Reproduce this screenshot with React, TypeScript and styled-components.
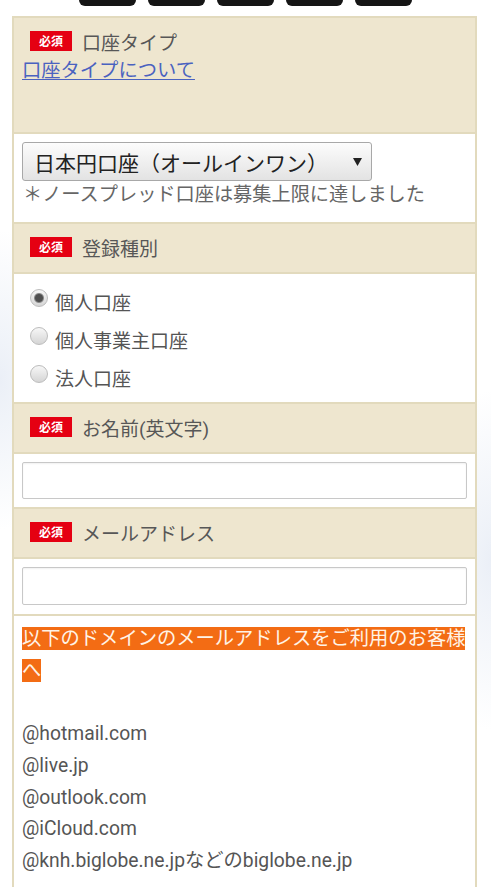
import React from "react";
import styled, { createGlobalStyle } from "styled-components";

const GlobalStyle = createGlobalStyle`
  html, body { margin: 0; padding: 0; }
  body {
    background:
      radial-gradient(ellipse 70px 150px at 0px 380px, rgba(218, 226, 240, 0.55), rgba(255, 255, 255, 0) 100%),
      radial-gradient(ellipse 70px 170px at 491px 560px, rgba(218, 226, 240, 0.55), rgba(255, 255, 255, 0) 100%),
      #ffffff;
    font-family: Roboto, "Noto Sans CJK JP", sans-serif;
    color: #555;
  }
`;

const TopNav = styled.nav`
  display: flex;
  justify-content: center;
  gap: 12px;
  height: 6px;
`;

const NavTab = styled.span`
  width: 57px;
  height: 6px;
  background: #151515;
  border-radius: 0 0 6px 6px;
`;

const FormTable = styled.div`
  margin: 10px 14px 0 12px;
  border-left: 2px solid #e2dabd;
  border-right: 2px solid #e2dabd;
`;

const HeadRow = styled.div<{ $padBottom?: number }>`
  background: #eee6cf;
  border-top: 2px solid #e2dabd;
  padding: 8px 8px ${(p) => (p.$padBottom ?? 10)}px;
`;

const HeadLine = styled.div`
  display: flex;
  align-items: center;
  gap: 10px;
  height: 30px;
  padding-left: 8px;
`;

const Badge = styled.span`
  display: inline-block;
  background: #e50012;
  color: #fff;
  font-family: "Noto Sans CJK JP", sans-serif;
  font-size: 12px;
  font-weight: 700;
  height: 20px;
  line-height: 20px;
  padding: 0 9px;
`;

const HeadLabel = styled.span`
  font-size: 19px;
  color: #575757;
`;

const HelpLink = styled.a`
  display: block;
  font-size: 19.3px;
  line-height: 30px;
  color: #4a62c0;
  text-decoration: underline;
  text-underline-offset: 2px;
`;

const BodyRow = styled.div<{ $pad: string }>`
  background: #fff;
  border-top: 2px solid #e2dabd;
  padding: ${(p) => p.$pad};
`;

const SelectBox = styled.div`
  display: flex;
  align-items: center;
  width: 350px;
  height: 39px;
  box-sizing: border-box;
  border: 1px solid #a8a8a8;
  border-radius: 3px;
  background: linear-gradient(#fcfcfc, #e3e3e3);
  padding: 0 9px 0 11px;
  font-size: 21px;
  color: #222;
  font-family: "Noto Sans CJK JP", sans-serif;
`;

const SelectText = styled.span`
  flex: 1;
`;

const Note = styled.div`
  font-size: 19.2px;
  line-height: 28px;
  color: #666;
  padding-left: 1px;
`;

const RadioList = styled.div`
  display: flex;
  flex-direction: column;
`;

const RadioItem = styled.label`
  display: flex;
  align-items: center;
  gap: 7px;
  height: 38px;
  padding-left: 8px;
  font-size: 19px;
  color: #555;
`;

const Radio = styled.input`
  appearance: none;
  margin: 0 0 7px 0;
  width: 18px;
  height: 18px;
  border-radius: 50%;
  border: 1px solid #bcbcbc;
  background: linear-gradient(#f7f7f7, #d5d5d5);
  box-sizing: border-box;
  &:checked {
    background:
      radial-gradient(circle, #4f4f4f 0 3.5px, #8a8a8a 4.5px, rgba(0, 0, 0, 0) 5.5px),
      linear-gradient(#f7f7f7, #d5d5d5);
  }
`;

const TextInput = styled.input<{ $h: number }>`
  display: block;
  width: 100%;
  height: ${(p) => p.$h}px;
  box-sizing: border-box;
  border: 1px solid #c8c8c8;
  border-radius: 2px;
  box-shadow: inset 0 1px 2px rgba(0, 0, 0, 0.06);
  background: #fff;
`;

const Notice = styled.div`
  font-size: 19.3px;
  line-height: 31.7px;
  color: #555;
`;

const Highlight = styled.span`
  background: #f36c14;
  color: #fff3e6;
`;

const Blank = styled.div`
  height: 31.7px;
`;

const Domain = styled.div``;

function Head({ label }: { label: string }) {
  return (
    <HeadLine>
      <Badge>必須</Badge>
      <HeadLabel>{label}</HeadLabel>
    </HeadLine>
  );
}

const domains = [
  "@hotmail.com",
  "@live.jp",
  "@outlook.com",
  "@iCloud.com",
  "@knh.biglobe.ne.jpなどのbiglobe.ne.jp",
];

export default function App() {
  return (
    <>
      <GlobalStyle />
      <TopNav>
        {[0, 1, 2, 3, 4].map((i) => (
          <NavTab key={i} />
        ))}
      </TopNav>
      <FormTable>
        <HeadRow $padBottom={46}>
          <Head label="口座タイプ" />
          <HelpLink href="#">口座タイプについて</HelpLink>
        </HeadRow>
        <BodyRow $pad="8px 8px 13px">
          <SelectBox>
            <SelectText>日本円口座（オールインワン）</SelectText>
            <svg width="9" height="8" viewBox="0 0 9 8">
              <path d="M0 0 H9 L4.5 8 Z" fill="#222" />
            </svg>
          </SelectBox>
          <Note>＊ノースプレッド口座は募集上限に達しました</Note>
        </BodyRow>
        <HeadRow>
          <Head label="登録種別" />
        </HeadRow>
        <BodyRow $pad="8px 8px 6px">
          <RadioList>
            <RadioItem>
              <Radio type="radio" name="kind" defaultChecked />
              個人口座
            </RadioItem>
            <RadioItem>
              <Radio type="radio" name="kind" />
              個人事業主口座
            </RadioItem>
            <RadioItem>
              <Radio type="radio" name="kind" />
              法人口座
            </RadioItem>
          </RadioList>
        </BodyRow>
        <HeadRow>
          <Head label="お名前(英文字)" />
        </HeadRow>
        <BodyRow $pad="8px 8px 8px">
          <TextInput type="text" $h={37} />
        </BodyRow>
        <HeadRow>
          <Head label="メールアドレス" />
        </HeadRow>
        <BodyRow $pad="8px 8px 9px">
          <TextInput type="text" $h={38} />
        </BodyRow>
        <BodyRow $pad="7px 8px 20px">
          <Notice>
            <Highlight>以下のドメインのメールアドレスをご利用のお客様へ</Highlight>
            <Blank />
            {domains.map((d) => (
              <Domain key={d}>{d}</Domain>
            ))}
          </Notice>
        </BodyRow>
      </FormTable>
    </>
  );
}
